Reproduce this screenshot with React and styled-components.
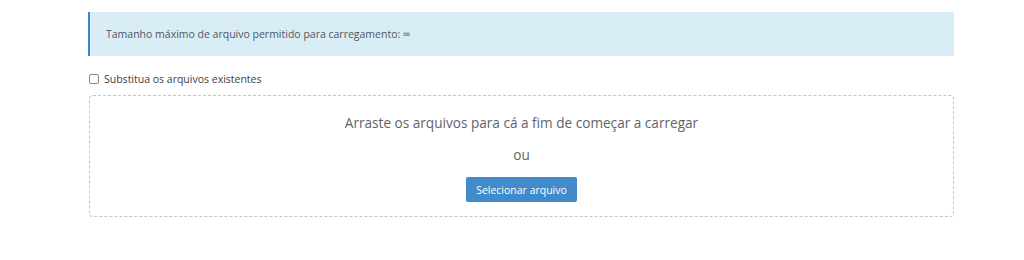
import React from "react";
import styled, { createGlobalStyle } from "styled-components";

const Global = createGlobalStyle`
  html, body {
    margin: 0;
    padding: 0;
    background: #fff;
    font-family: "Open Sans", "Noto Sans", sans-serif;
  }
`;

const Page = styled.div`
  padding: 12px 0 0 88px;
  width: 866px;
`;

const Alert = styled.div`
  height: 44px;
  display: flex;
  align-items: center;
  padding-left: 16px;
  background-color: #d9edf7;
  border-left: 2px solid #3a87c3;
  font-size: 10.5px;
  color: #4f5660;
  box-sizing: border-box;
`;

const Option = styled.label`
  display: flex;
  align-items: center;
  gap: 5px;
  margin: 16px 0 0 1px;
  font-size: 10.5px;
  color: #3c4148;
  height: 13px;
`;

const Check = styled.input`
  appearance: none;
  margin: 0;
  width: 10px;
  height: 10px;
  border: 1px solid #8a8a8a;
  border-radius: 2px;
  box-sizing: border-box;
  background: #fff;
`;

const DropZone = styled.div`
  margin: 10px 0 0 1px;
  height: 122px;
  box-sizing: border-box;
  border: 1.5px dashed #c4c4c4;
  border-radius: 4px;
  display: flex;
  flex-direction: column;
  align-items: center;
  padding-top: 17px;
`;

const Hint = styled.div`
  font-size: 13.6px;
  color: #5f6368;
  line-height: 20px;
`;

const Or = styled(Hint)`
  margin-top: 12px;
`;

const Button = styled.button`
  margin-top: 12px;
  height: 25px;
  width: 111px;
  border: none;
  border-radius: 2px;
  background-color: #428bca;
  color: #fff;
  font-family: "Open Sans", "Noto Sans", sans-serif;
  font-size: 10.5px;
  padding: 0;
`;

const App = () => {
  return (
    <>
      <Global />
      <Page>
        <Alert>Tamanho máximo de arquivo permitido para carregamento: ∞</Alert>
        <Option>
          <Check type="checkbox" />
          Substitua os arquivos existentes
        </Option>
        <DropZone>
          <Hint>Arraste os arquivos para cá a fim de começar a carregar</Hint>
          <Or>ou</Or>
          <Button>Selecionar arquivo</Button>
        </DropZone>
      </Page>
    </>
  );
};

export default App;
